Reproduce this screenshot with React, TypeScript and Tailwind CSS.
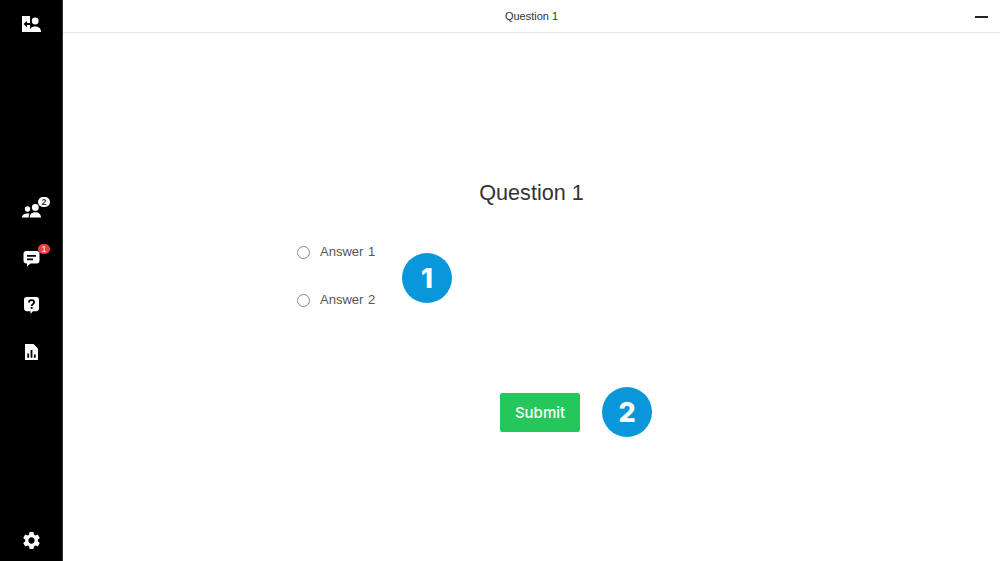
import React from "react";

function NavIcon({ children, badge, badgeClass }: { children: React.ReactNode; badge?: string; badgeClass?: string }) {
  return (
    <div className="relative flex h-[47px] w-full items-center justify-center pl-[1px]">
      {children}
      {badge && (
        <span className={`absolute left-[38px] top-[10px] flex h-[10px] w-[12px] items-center justify-center rounded-full text-[9px] leading-none ${badgeClass}`}>
          {badge}
        </span>
      )}
    </div>
  );
}

function Answer({ label }: { label: string }) {
  return (
    <label className="flex h-[18px] items-center">
      <span className="h-[13px] w-[13px] rounded-full border border-[#8a8a8a] bg-white" />
      <span className="ml-[10px] text-[13px] text-[#555] [word-spacing:1px]">{label}</span>
    </label>
  );
}

function Step({ n, className }: { n: string; className: string }) {
  return (
    <div className={`absolute flex h-[50px] w-[50px] items-center justify-center rounded-full bg-[#0a97d9] pt-[1px] font-['Inter',sans-serif] text-[27px] font-extrabold leading-none text-white ${className}`}>
      {n}
    </div>
  );
}

export default function App() {
  return (
    <div className="flex h-[561px] w-[1000px] overflow-hidden bg-white font-['Liberation_Sans',Arial,sans-serif]">
      <aside className="flex h-full w-[63px] shrink-0 flex-col items-center border-r border-[#333] bg-black">
        <div className="flex h-[47px] w-full items-center justify-center pl-[1px]">
          <svg width="20" height="16" viewBox="0 0 20 16" fill="white">
            <path d="M0 0h8v16H0zM1.500 8l3.500 3.200V9h3V7H5V4.800z" fillRule="evenodd" />
            <circle cx="13.200" cy="5" r="3.400" />
            <path d="M7.500 16c0-4 2.600-5.500 5.700-5.500s5.800 1.500 5.800 5.500z" />
          </svg>
        </div>
        <div className="mt-[140px] w-full">
          <NavIcon badge="2" badgeClass="bg-white font-bold text-[#333]">
            <svg width="20" height="14" viewBox="0 0 20 14" fill="white">
              <circle cx="5.500" cy="5" r="2.700" />
              <circle cx="13.300" cy="3.500" r="3.400" />
              <path d="M0 13.500c0-2.800 2.500-4 5.500-4 .8 0 1.500.1 2.100.3-.7.900-1 2.200-1 3.700zM7.700 13.500c0-3.700 2.500-5.300 5.600-5.300s5.700 1.600 5.700 5.300z" />
            </svg>
          </NavIcon>
          <NavIcon badge="1" badgeClass="bg-[#ec3d47] text-white">
            <svg width="17" height="17" viewBox="0 0 16 17" className="mt-[1px]">
              <path fill="white" d="M3 1h10a3 3 0 0 1 3 3v6.500a3 3 0 0 1-3 3H7L3.500 16.500v-3H3a3 3 0 0 1-3-3V4a3 3 0 0 1 3-3z" />
              <path fill="black" d="M3.500 5h9v1.800h-9zM3.500 8.500h6v1.800h-6z" />
            </svg>
          </NavIcon>
          <NavIcon>
            <svg width="15" height="17" viewBox="0 0 16 18" className="mt-[1px]">
              <path fill="white" d="M3 0h10a3 3 0 0 1 3 3v9a3 3 0 0 1-3 3H9.500L7 18v-3H3a3 3 0 0 1-3-3V3a3 3 0 0 1 3-3z" />
              <path fill="none" stroke="black" strokeWidth="1.900" d="M5.300 5.800c0-1.600 1.200-2.500 2.800-2.500s2.700.9 2.700 2.300c0 2-2.700 1.900-2.700 4" />
              <rect x="7.100" y="10.700" width="2" height="1.900" fill="black" />
            </svg>
          </NavIcon>
          <NavIcon>
            <svg width="13" height="16" viewBox="0 0 13 16">
              <path fill="white" d="M0 0h8.500L13 4.500V16H0z" />
              <path fill="black" d="M2.300 9.500h1.800v4.300H2.300zM5.600 6h1.800v7.800H5.600zM8.900 10.500h1.800v3.300H8.900z" />
            </svg>
          </NavIcon>
        </div>
        <div className="mt-auto flex h-[42px] w-full items-center justify-center pl-[1px]">
          <svg width="21" height="21" viewBox="0 0 24 24" fill="white">
            <path d="M19.140 12.940c.04-.3.060-.61.060-.94 0-.32-.020-.64-.070-.94l2.030-1.580a.49.49 0 0 0 .12-.61l-1.920-3.320a.488.488 0 0 0-.59-.22l-2.390.96c-.5-.38-1.030-.7-1.620-.94l-.36-2.540a.484.484 0 0 0-.48-.41h-3.840c-.24 0-.43.170-.47.410l-.36 2.540c-.59.240-1.130.57-1.620.94l-2.390-.96c-.22-.080-.47 0-.59.220L2.740 8.870c-.12.210-.08.470.12.610l2.030 1.580c-.05.300-.09.630-.09.940s.02.640.07.940l-2.030 1.580a.49.49 0 0 0-.12.610l1.920 3.320c.12.220.37.290.59.220l2.390-.96c.5.380 1.030.7 1.620.94l.36 2.540c.05.240.24.410.48.410h3.840c.24 0 .44-.17.470-.41l.36-2.540c.59-.24 1.130-.56 1.620-.94l2.390.96c.22.080.47 0 .59-.22l1.920-3.320c.12-.22.070-.47-.12-.61l-2.010-1.580zM12 15.600A3.610 3.610 0 0 1 8.400 12c0-1.980 1.620-3.600 3.600-3.600s3.600 1.620 3.600 3.600-1.620 3.600-3.600 3.600z" />
          </svg>
        </div>
      </aside>

      <main className="relative flex min-w-0 flex-1 flex-col">
        <header className="relative flex h-[33px] shrink-0 items-center justify-center border-b border-[#e8e8e0]">
          <span className="text-[11px] text-[#333]">Question 1</span>
          <span className="absolute right-[12px] top-[16px] h-[1.500px] w-[13px] bg-[#222]" />
        </header>
        <div className="flex flex-1 flex-col">
          <h1 className="mt-[147px] text-center text-[21.600px] font-normal leading-[26px] text-[#333]">Question 1</h1>
          <div className="ml-[234px] mt-[37px] flex flex-col gap-[30px]">
            <Answer label="Answer 1" />
            <Answer label="Answer 2" />
          </div>
          <button className="ml-[437px] mt-[84px] h-[39px] w-[80px] rounded-[2px] bg-[#25c75a] pt-[1px] font-['Inter',sans-serif] text-[15px] font-medium text-white">
            Submit
          </button>
        </div>
        <Step n="1" className="left-[339px] top-[253px]" />
        <Step n="2" className="left-[539px] top-[387px]" />
      </main>
    </div>
  );
}
